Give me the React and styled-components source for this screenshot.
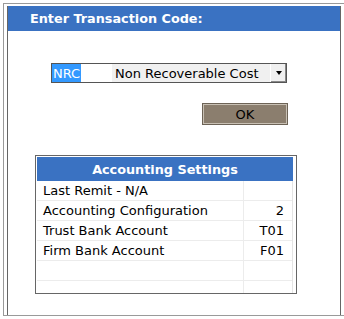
import React from "react";
import styled, { createGlobalStyle } from "styled-components";

const Global = createGlobalStyle`
  body {
    margin: 0;
    background: #fff;
    font-family: "DejaVu Sans", Verdana, sans-serif;
  }
`;

const Frame = styled.div`
  margin: 3px 0 0 3px;
  width: 341px;
  height: 313px;
  border-top: 1px solid #9a9a9a;
  border-left: 1px solid #9a9a9a;
  border-bottom: 1px solid #9a9a9a;
  box-sizing: border-box;
  padding: 2px 0 0 3px;
`;

const Dialog = styled.div`
  width: 334px;
  height: 309px;
  box-sizing: border-box;
  border-left: 1px solid #666;
  border-right: 1px solid #666;
  display: flex;
  flex-direction: column;
`;

const TitleBar = styled.div`
  height: 25px;
  background: #3a72c2;
  color: #fff;
  font-weight: bold;
  font-size: 12.8px;
  display: flex;
  align-items: center;
  padding-left: 22px;
`;

const Body = styled.div`
  display: flex;
  flex-direction: column;
  padding: 32px 0 0 43px;
`;

const Select = styled.div`
  width: 236px;
  height: 20px;
  box-sizing: border-box;
  border: 1px solid #555;
  display: flex;
  align-items: stretch;
  font-size: 13px;
  background: #fff;
`;

const Code = styled.div`
  width: 60px;
  display: flex;
  align-items: center;
  span {
    background: #3399ff;
    color: #fff;
    height: 100%;
    display: flex;
    align-items: center;
    padding: 0 1px;
  }
`;

const Desc = styled.div`
  flex: 1;
  background: #f0f0f0;
  display: flex;
  align-items: center;
  padding-left: 3px;
  color: #000;
`;

const Arrow = styled.div`
  width: 15px;
  background: #f0f0f0;
  border-left: 1px solid #fff;
  box-shadow: inset -1px -1px 0 #888;
  display: flex;
  align-items: center;
  justify-content: center;
  &::after {
    content: "";
    border-left: 3px solid transparent;
    border-right: 3px solid transparent;
    border-top: 4px solid #000;
  }
`;

const ButtonRow = styled.div`
  display: flex;
  justify-content: flex-end;
  width: 236px;
  margin-top: 21px;
`;

const OkButton = styled.button`
  width: 84px;
  height: 20px;
  background: #8b7e6e;
  border: 1px solid #c8c0b4;
  box-shadow: 0 0 0 1px #6d6356;
  font-family: "DejaVu Sans", Verdana, sans-serif;
  font-size: 13px;
  color: #000;
  padding: 0;
`;

const Panel = styled.div`
  margin: 31px 0 0 -16px;
  width: 262px;
  height: 139px;
  box-sizing: border-box;
  border: 1px solid #666;
  padding: 1px 3px 0 1px;
  overflow: hidden;
`;

const PanelHead = styled.div`
  height: 24px;
  background: #3a72c2;
  color: #fff;
  font-weight: bold;
  font-size: 12.8px;
  display: flex;
  align-items: center;
  justify-content: center;
`;

const Table = styled.div`
  border-right: 1px solid #e4e4e4;
  display: grid;
  grid-template-columns: 206px 1fr;
  font-size: 13px;
  color: #000;
`;

const Cell = styled.div`
  height: 20px;
  box-sizing: border-box;
  border-bottom: 1px solid #ececec;
  border-left: ${(p) => (p.$value ? "1px solid #ececec" : "none")};
  display: flex;
  align-items: center;
  justify-content: ${(p) => (p.$value ? "flex-end" : "flex-start")};
  padding: ${(p) => (p.$value ? "0 8px 0 0" : "0 0 0 6px")};
`;

const rows = [
  ["Last Remit - N/A", ""],
  ["Accounting Configuration", "2"],
  ["Trust Bank Account", "T01"],
  ["Firm Bank Account", "F01"],
  ["", ""],
  ["", ""],
];

export default function App() {
  return (
    <>
      <Global />
      <Frame>
        <Dialog>
          <TitleBar>Enter Transaction Code:</TitleBar>
          <Body>
            <Select>
              <Code>
                <span>NRC</span>
              </Code>
              <Desc>Non Recoverable Cost</Desc>
              <Arrow />
            </Select>
            <ButtonRow>
              <OkButton>OK</OkButton>
            </ButtonRow>
            <Panel>
              <PanelHead>Accounting Settings</PanelHead>
              <Table>
                {rows.map(([label, value], i) => (
                  <React.Fragment key={i}>
                    <Cell>{label}</Cell>
                    <Cell $value>{value}</Cell>
                  </React.Fragment>
                ))}
              </Table>
            </Panel>
          </Body>
        </Dialog>
      </Frame>
    </>
  );
}
